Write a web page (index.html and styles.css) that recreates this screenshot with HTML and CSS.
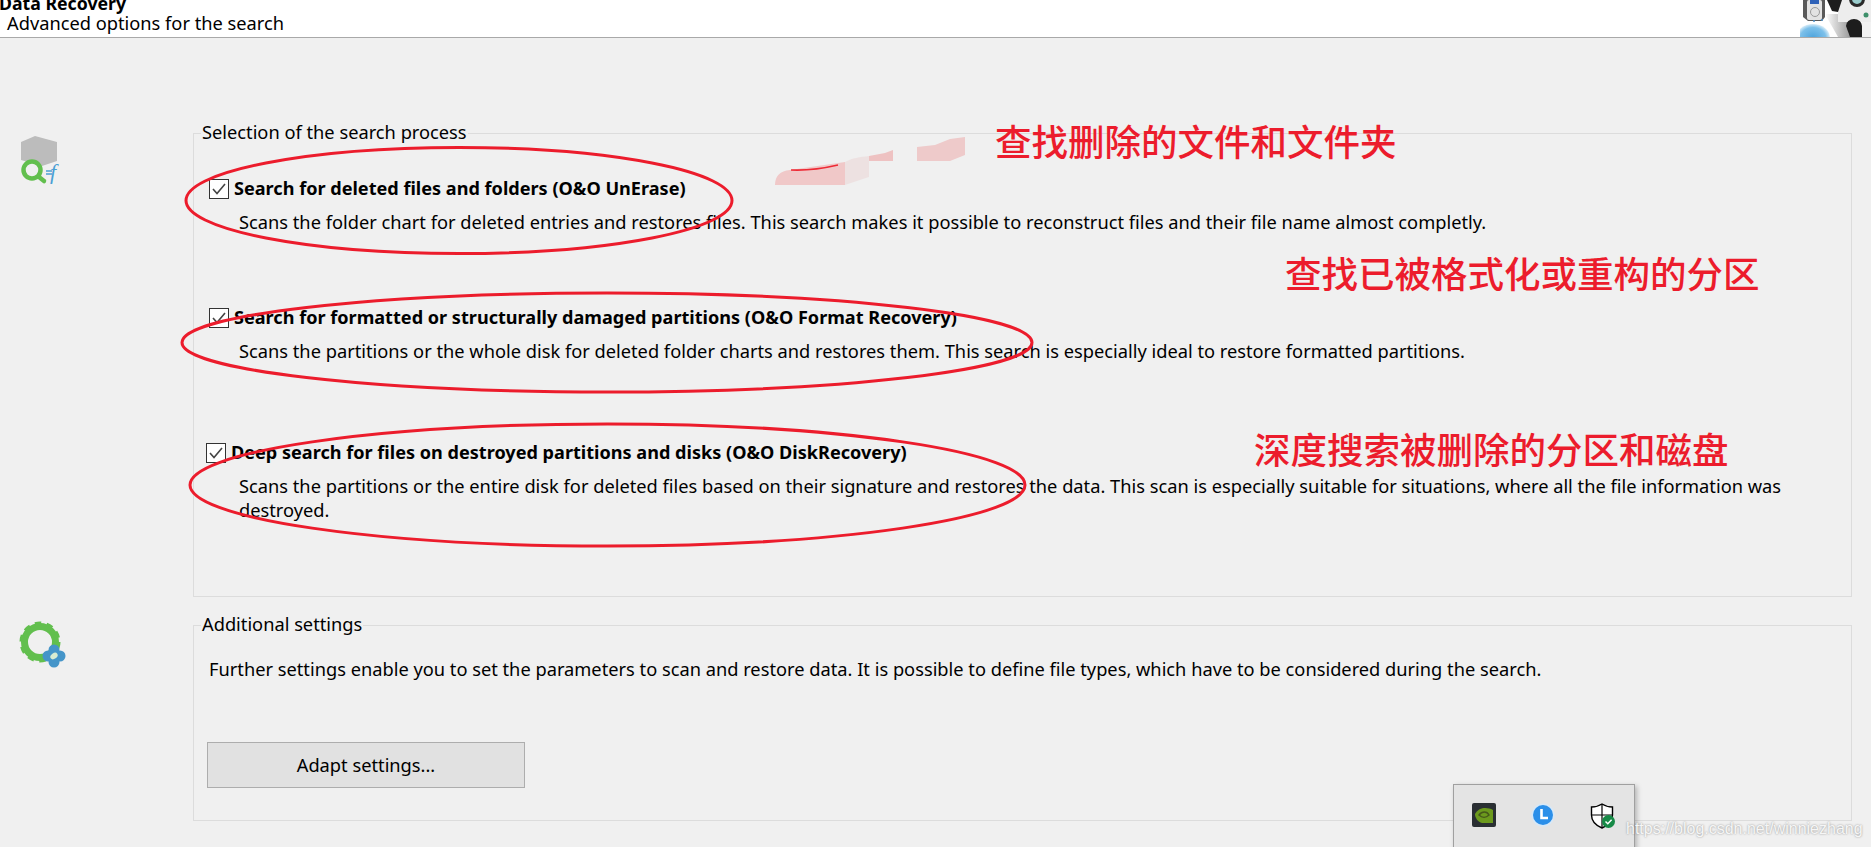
FILE: index.html
```html
<!DOCTYPE html>
<html lang="en">
<head>
<meta charset="utf-8">
<title>Data Recovery</title>
<link rel="stylesheet" href="styles.css">
</head>
<body>
<header class="header">
  <div class="header-text">
    <div class="title">Data Recovery</div>
    <div class="subtitle">Advanced options for the search</div>
  </div>
  <svg class="logo" width="71" height="37" viewBox="0 0 71 37">
    <defs>
      <linearGradient id="fade" x1="0" x2="1"><stop offset="0" stop-color="#fff"/><stop offset="1" stop-color="#9a9a9a"/></linearGradient>
      <radialGradient id="water"><stop offset="0" stop-color="#4da3dc"/><stop offset="0.75" stop-color="#7cc0ea"/><stop offset="1" stop-color="#d6ecf8"/></radialGradient>
    </defs>
    <path d="M25 14H50V37H38Z" fill="url(#fade)"/>
    <path d="M3 0H25V17L22 21H8L3 17Z" fill="#5a5a5a"/>
    <rect x="7" y="0" width="15" height="20" rx="2" fill="#e3e3e3"/>
    <rect x="10" y="0" width="9" height="4" fill="#2f62b8"/>
    <circle cx="15" cy="12" r="4.5" fill="none" stroke="#9a9a9a"/>
    <circle cx="14" cy="21" r="1" fill="#4d8fc7"/><circle cx="22" cy="20" r="1" fill="#4d8fc7"/>
    <ellipse cx="13" cy="38" rx="17" ry="14" fill="url(#water)"/>
    <rect x="38" y="0" width="33" height="22" fill="#ededed"/>
    <path d="M27 0H42L38 12L32 11Z" fill="#1d1d1d"/>
    <path d="M46 26a8 7 0 0 1 16 0v11H50Z" fill="#1d1d1d"/>
    <circle cx="57" cy="-1" r="8" fill="#2a2a2a"/><circle cx="57" cy="-1" r="5" fill="#9cc"/>
    <circle cx="66" cy="15" r="2.5" fill="#3d8f6a"/>
    <path d="M62 22H71V37H62Z" fill="#f2f2f2"/>
  </svg>
</header>

<main class="main">
  <section class="row row-search">
    <svg class="side-icon" width="64" height="60" viewBox="0 0 64 60">
      <path d="M21 9L35 3L57 9V28L42 33L21 27Z" fill="#bcbcbc"/>
      <circle cx="32" cy="37" r="8.500" fill="#f0f0f0" stroke="#62bf4e" stroke-width="4.500"/>
      <path d="M39 44L44 48" stroke="#62bf4e" stroke-width="4.500" stroke-linecap="round"/>
      <path d="M46 38H52M46 41H52" stroke="#4a9fd4" stroke-width="1.400"/>
      <text x="50" y="46" class="fx">f</text>
    </svg>
    <fieldset class="group group-search">
      <legend class="group-label">Selection of the search process</legend>
      <div class="option option-one">
        <div class="option-head"><span class="check"><svg width="14" height="12" viewBox="0 0 14 12"><path d="M1 6L5 10.5L13 1" fill="none" stroke="#444" stroke-width="1.6"/></svg></span><strong>Search for deleted files and folders (O&amp;O UnErase)</strong></div>
        <p class="desc">Scans the folder chart for deleted entries and restores files. This search makes it possible to reconstruct files and their file name almost completly.</p>
      </div>
      <div class="option option-two">
        <div class="option-head"><span class="check"><svg width="14" height="12" viewBox="0 0 14 12"><path d="M1 6L5 10.5L13 1" fill="none" stroke="#444" stroke-width="1.6"/></svg></span><strong>Search for formatted or structurally damaged partitions (O&amp;O Format Recovery)</strong></div>
        <p class="desc">Scans the partitions or the whole disk for deleted folder charts and restores them. This search is especially ideal to restore formatted partitions.</p>
      </div>
      <div class="option option-three">
        <div class="option-head"><span class="check"><svg width="14" height="12" viewBox="0 0 14 12"><path d="M1 6L5 10.5L13 1" fill="none" stroke="#444" stroke-width="1.6"/></svg></span><strong>Deep search for files on destroyed partitions and disks (O&amp;O DiskRecovery)</strong></div>
        <p class="desc">Scans the partitions or the entire disk for deleted files based on their signature and restores the data. This scan is especially suitable for situations, where all the file information was destroyed.</p>
      </div>
    </fieldset>
  </section>

  <section class="row row-settings">
    <svg class="side-icon" width="70" height="60" viewBox="0 0 70 60">
      <circle cx="40" cy="22" r="15.500" fill="none" stroke="#62bf4e" stroke-width="7"/>
      <circle cx="40" cy="22" r="18.500" fill="none" stroke="#62bf4e" stroke-width="4" stroke-dasharray="6.300 5.350"/>
      <g fill="#4595c9">
        <circle cx="54" cy="30" r="5.500"/><circle cx="54" cy="42" r="5.500"/><circle cx="48" cy="36" r="5.500"/><circle cx="60" cy="36" r="5.500"/><circle cx="54" cy="36" r="7"/>
      </g>
      <ellipse cx="54" cy="36" rx="4" ry="2.800" fill="#d9ecd2" transform="rotate(-35 54 36)"/>
    </svg>
    <fieldset class="group group-settings">
      <legend class="group-label">Additional settings</legend>
      <p class="settings-text">Further settings enable you to set the parameters to scan and restore data. It is possible to define file types, which have to be considered during the search.</p>
      <button class="btn" type="button">Adapt settings...</button>
    </fieldset>
  </section>
</main>

<svg class="ink" width="1871" height="847" viewBox="0 0 1871 847">
  <g class="smudge">
    <path d="M775 185C775 176 780 171 790 170L845 162V185Z" fill="#f0c8c8"/>
    <path d="M845 162C852 158 860 157 869 156V177L845 185Z" fill="#ede1e1"/>
    <path d="M869 156L885 153L893 150V161H869Z" fill="#eec2c2"/>
    <path d="M917 147L935 145L950 139L965 137V155L950 161H917Z" fill="#eecaca"/>
    <path d="M791 170C810 171 825 168 838 165" fill="none" stroke="#ee2a35" stroke-width="1.6"/>
  </g>
  <g fill="none" stroke="#ec1c2c" stroke-width="3">
    <ellipse cx="459" cy="200.500" rx="273" ry="53"/>
    <ellipse cx="607" cy="342.500" rx="425" ry="49.500"/>
    <ellipse cx="607.500" cy="485" rx="417.500" ry="61"/>
  </g>
</svg>

<div class="note note-one">查找删除的文件和文件夹</div>
<div class="note note-two">查找已被格式化或重构的分区</div>
<div class="note note-three">深度搜索被删除的分区和磁盘</div>

<aside class="tray">
  <svg width="24" height="24" viewBox="0 0 24 24">
    <rect width="24" height="24" rx="2" fill="#2a2f33"/>
    <path d="M3 11C7 4 15 4 21 7V20H10C6 19 3 15 3 11Z" fill="#6c9a1d"/>
    <path d="M7 12C10 8 15 8 17 12C14 15 10 15 7 12Z" fill="none" stroke="#46591a" stroke-width="1.500"/>
  </svg>
  <svg width="24" height="24" viewBox="0 0 24 24">
    <circle cx="12" cy="12" r="11.500" fill="#d6e8f8"/>
    <circle cx="12" cy="12" r="10" fill="#2b8fe9"/>
    <path d="M10.500 6V15H17" fill="none" stroke="#fff" stroke-width="2.600"/>
  </svg>
  <svg width="26" height="26" viewBox="0 0 26 26">
    <path d="M12 1C9 3 5 4 1.500 4V12C1.500 18 6 22.500 12 25C18 22.500 22.500 18 22.500 12V4C19 4 15 3 12 1Z" fill="#fff" stroke="#000" stroke-width="1.400"/>
    <path d="M12 1V25M1.500 12H22.500" stroke="#000" stroke-width="1.200"/>
    <circle cx="18.500" cy="18.500" r="6.500" fill="#178a47"/>
    <path d="M15.500 18.500L17.800 20.800L21.600 16.800" fill="none" stroke="#fff" stroke-width="1.500"/>
  </svg>
</aside>
<div class="watermark">https://blog.csdn.net/winniezhang</div>
</body>
</html>
```
FILE: styles.css
```css
* { box-sizing: border-box; }
html, body { margin: 0; padding: 0; }
body {
  width: 1871px;
  height: 847px;
  overflow: hidden;
  background: #f0f0f0;
  color: #000;
  font-family: "Noto Sans", "Open Sans", sans-serif;
  font-size: 18.25px;
  position: relative;
}
.header {
  height: 38px;
  background: #fff;
  border-bottom: 1px solid #a9a9a9;
  display: flex;
  justify-content: space-between;
  overflow: hidden;
}
.header-text { margin-top: -5px; }
.title { font-weight: 700; font-size: 17.7px; line-height: 16px; margin-left: -1px; }
.subtitle { line-height: 24px; margin-left: 7px; }
.logo { display: block; }

.main { padding-top: 82px; padding-right: 19px; display: flex; flex-direction: column; gap: 15px; }
.row { display: flex; }
.side-icon { flex: none; display: block; }
.row-search .side-icon { margin: 13px 129px 0 0; }
.row-settings .side-icon { margin: 8px 123px 0 0; }
.fx { font: italic 22px "Liberation Serif", serif; fill: #4a9fd4; }

.group {
  flex: 1;
  margin: 0;
  padding: 0;
  border: 1px solid #dcdcdc;
  min-width: 0;
}
.group-search { height: 477px; }
.group-settings { height: 209px; }
.group-label { padding: 0 1px 2px; margin-left: 7px; line-height: 24px; }

.option-head { display: flex; align-items: center; gap: 5px; line-height: 24px; }
.option-head strong { font-weight: 700; font-size: 18.1px; margin-bottom: 2px; }
.check {
  width: 20px;
  height: 20px;
  flex: none;
  background: #fff;
  border: 1px solid #333;
  display: flex;
  align-items: center;
  justify-content: center;
}
.option-one { padding: 30px 0 0 15px; }
.option-two { padding: 71px 0 0 15px; }
.option-three { padding: 77px 0 0 12px; }
.desc { margin: 8px 50px 0 30px; line-height: 24px; }
.option-three .desc { margin-left: 33px; }

.settings-text { margin: 19px 0 0 15px; line-height: 24px; }
.btn {
  display: block;
  width: 318px;
  height: 46px;
  margin: 61px 0 0 13px;
  background: #e1e1e1;
  border: 1px solid #adadad;
  font: inherit;
  color: #000;
  padding: 0 0 2px;
}

.ink { position: absolute; left: 0; top: 0; pointer-events: none; }
.note {
  position: absolute;
  color: #ec1c2c;
  font-family: "Noto Sans CJK SC", sans-serif;
  font-weight: 500;
  font-size: 36.5px;
  line-height: 44px;
  white-space: nowrap;
}
.note-one { left: 995px; top: 119px; }
.note-two { left: 1285px; top: 251px; }
.note-three { left: 1254px; top: 427px; }

.tray {
  position: absolute;
  left: 1453px;
  top: 784px;
  width: 182px;
  height: 70px;
  background: #e4e4e4;
  border: 1px solid #a0a0a0;
  box-shadow: 2px 2px 5px rgba(0, 0, 0, .25);
  display: flex;
  justify-content: space-between;
  align-items: flex-start;
  padding: 18px 18px 0 18px;
}
.watermark {
  position: absolute;
  left: 1626px;
  top: 819px;
  font-family: "Liberation Sans", sans-serif;
  font-size: 16px;
  line-height: 20px;
  color: #f6f6f6;
  text-shadow: 0 0 2px rgba(70, 70, 70, .6);
}
```
